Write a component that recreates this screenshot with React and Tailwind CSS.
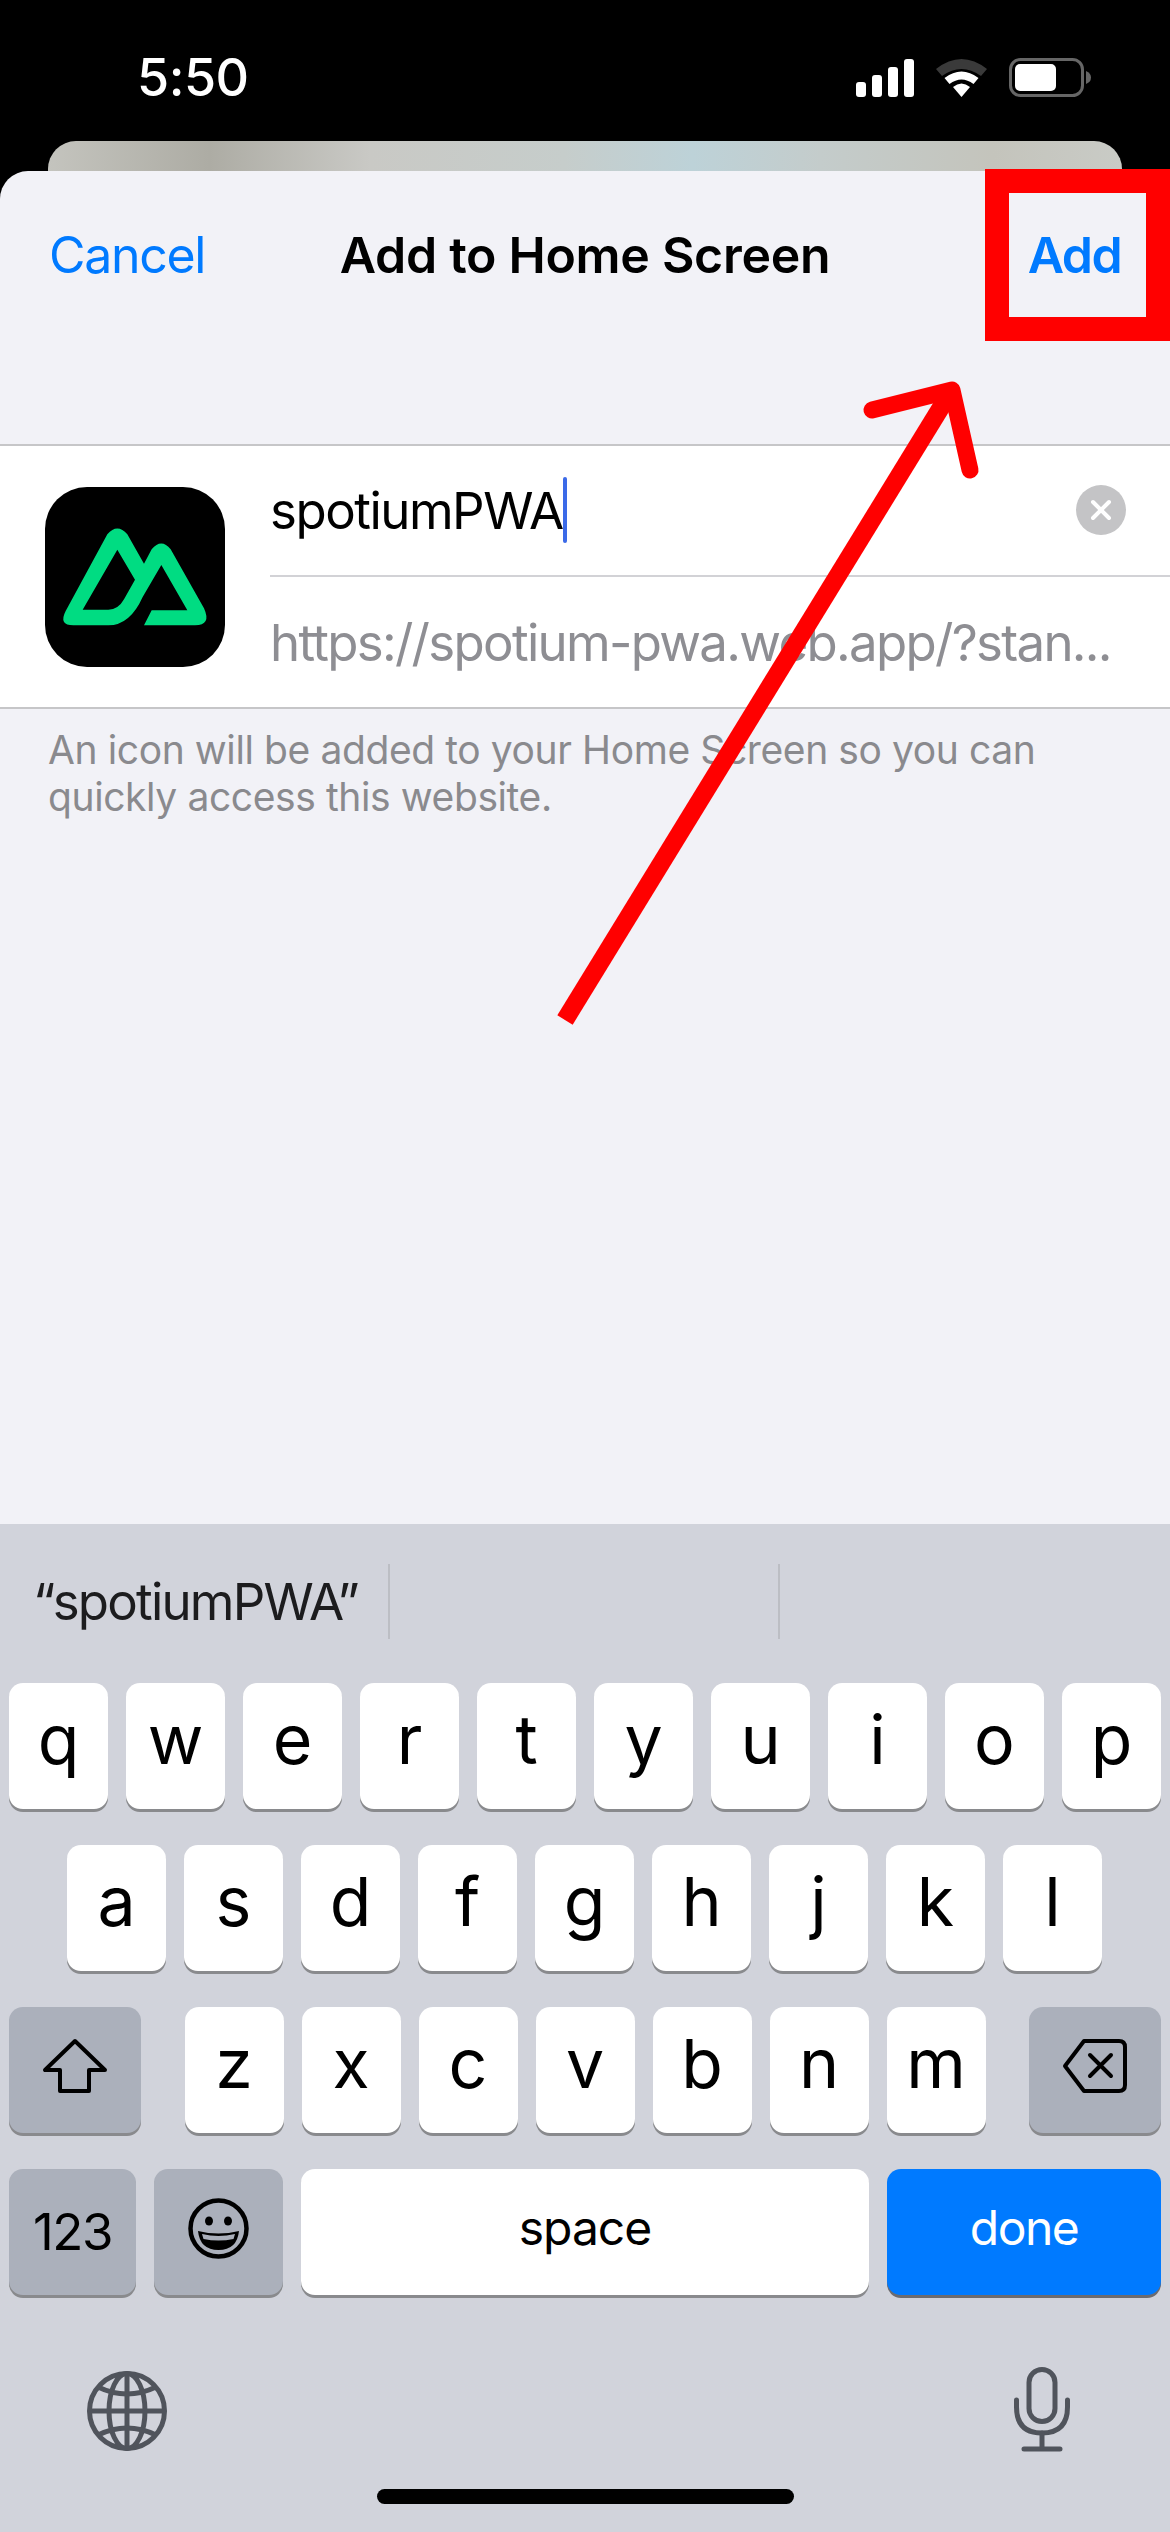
import React from 'react'

const font = { fontFamily: 'Inter, sans-serif' }

const toneClass = {
  light: 'bg-white shadow-[0_3px_0_#898a8d]',
  dark: 'bg-[#abb0bb] shadow-[0_3px_0_#898a8d]',
  blue: 'bg-[#007aff] shadow-[0_3px_0_#6b6b70]',
}

const Key = ({ label, tone = 'light', children, className = 'w-[99px]' }) => (
  <div className={`flex h-[126px] items-center justify-center rounded-[14px] pb-2 text-black ${toneClass[tone]} ${className}`}>
    {label && <span className="mb-[6px] text-[68px] leading-none">{label}</span>}
    {children}
  </div>
)

const Row = ({ keys, className = '' }) => (
  <div className={`flex gap-[18px] ${className}`}>
    {keys.split('').map((k) => <Key key={k} label={k} />)}
  </div>
)

const NuxtLogo = () => (
  <svg width="180" height="180" viewBox="75 48 540 540">
    <path
      fill="#00dc82"
      fillRule="evenodd"
      d="M372 463 L395 418 L502 418 L424 282 L368 378 Q330 463 265 463 L160 463 Q115 463 137 420 L262 190 Q292 155 322 190 L372 278 L395 235 Q424 200 452 235 L552 412 Q575 463 525 463 Z M292 236 L188 416 L265 416 Q295 416 312 385 L345 326 Z"
    />
  </svg>
)

const StatusIcons = () => (
  <div className="flex items-center">
    <svg width="58" height="38" viewBox="0 0 58 38" fill="#fff">
      <rect x="0" y="23" width="10" height="15" rx="3" />
      <rect x="16" y="16" width="10" height="22" rx="3" />
      <rect x="32" y="8" width="10" height="30" rx="3" />
      <rect x="48" y="0" width="10" height="38" rx="3" />
    </svg>
    <svg className="ml-[22px]" width="51" height="38" viewBox="0 0 51 38">
      <path d="M0 10 Q25.5 -10 51 10 L45 17 Q25.5 3 6 17 Z" fill="#3a3a3a" />
      <path d="M8.500 19 Q25.500 6 42.500 19 L37.500 25 Q25.500 16 13.500 25 Z" fill="#fff" />
      <path d="M17 28 Q25.500 21 34 28 L25.500 38 Z" fill="#fff" />
    </svg>
    <svg className="ml-[22px]" width="82" height="39" viewBox="0 0 82 39">
      <rect x="1.500" y="1.500" width="72" height="36" rx="10" fill="none" stroke="#666" strokeWidth="3" />
      <rect x="6" y="6" width="41" height="27" rx="5" fill="#fff" />
      <path d="M77 13 Q82 15 82 19.500 Q82 24 77 26 Z" fill="#666" />
    </svg>
  </div>
)

const ShiftIcon = () => (
  <svg width="66" height="56" viewBox="0 0 66 56" fill="none" stroke="#000" strokeWidth="4" strokeLinejoin="round">
    <path d="M33 3 L3 32 H18 V53 H47 V32 H63 Z" />
  </svg>
)

const DeleteIcon = () => (
  <svg width="66" height="56" viewBox="0 0 66 56" fill="none" stroke="#000" strokeWidth="4" strokeLinejoin="round" strokeLinecap="round">
    <path d="M22 3 H57 Q63 3 63 9 V47 Q63 53 57 53 H22 L3 28 Z" />
    <path d="M28 17 L49 38 M49 17 L28 38" />
  </svg>
)

const EmojiIcon = () => (
  <svg width="61" height="61" viewBox="0 0 61 61">
    <circle cx="30.500" cy="30.500" r="28" fill="none" stroke="#000" strokeWidth="4.500" />
    <ellipse cx="21" cy="23" rx="4" ry="4.500" />
    <ellipse cx="40" cy="23" rx="4" ry="4.500" />
    <path d="M10 33 Q30.500 38 51 33 Q49 52 30.500 52 Q12 52 10 33 Z" />
    <path d="M14 36 Q30.500 40 47 36 L45.500 41 Q30.500 44 15.500 41 Z" fill="#abb0bb" />
  </svg>
)

const GlobeIcon = () => (
  <svg width="80" height="80" viewBox="0 0 80 80" fill="none" stroke="#50545c" strokeWidth="5">
    <circle cx="40" cy="40" r="37.500" />
    <ellipse cx="40" cy="40" rx="18" ry="37.500" />
    <path d="M40 3 V77 M3 40 H77" />
    <path d="M11 16 Q40 30 69 16 M11 64 Q40 50 69 64" />
  </svg>
)

const MicIcon = () => (
  <svg width="56" height="85" viewBox="0 0 56 85" fill="none" stroke="#50545c" strokeWidth="5" strokeLinecap="round">
    <rect x="15" y="2.500" width="26" height="52" rx="13" />
    <path d="M2.500 33 V40 Q2.500 66 28 66 Q53.500 66 53.500 40 V33" />
    <path d="M28 66 V82 M10 82 H46" />
  </svg>
)

export default function App() {
  return (
    <div style={font} className="relative flex h-[2532px] w-[1170px] flex-col overflow-hidden bg-black">
      <div className="flex h-[141px] items-start justify-between pl-[137px] pr-[79px] pt-[58px]">
        <span className="text-[52px] font-medium leading-[40px] tracking-[-0.5px] text-white">5:50</span>
        <StatusIcons />
      </div>

      <div className="mx-[48px] h-[30px] rounded-t-[28px] bg-[linear-gradient(90deg,#c4c4be_0%,#adaca4_15%,#c9c9c5_30%,#c6cdcb_48%,#bdd2d8_60%,#c4cccb_72%,#c4c4bc_88%,#c9cbc6_100%)]" />

      <div className="flex flex-1 flex-col rounded-t-[28px] bg-[#f2f2f7]">
        <div className="grid h-[168px] grid-cols-[1fr_auto_1fr] items-center px-[49px] text-[50px] leading-none">
          <span className="tracking-[-1.3px] text-[#007aff]">Cancel</span>
          <span className="font-semibold tracking-[-0.3px] text-black">Add to Home Screen</span>
          <span className="text-right font-semibold tracking-[-1.6px] text-[#007aff]">Add</span>
        </div>

        <div className="mt-[105px] flex h-[265px] items-center gap-[45px] border-y-2 border-[#c6c6c8] bg-white pl-[45px]">
          <div className="h-[180px] w-[180px] shrink-0 overflow-hidden rounded-[42px] bg-black">
            <NuxtLogo />
          </div>
          <div className="min-w-0 flex-1">
            <div className="flex h-[132px] items-center justify-between border-b-2 border-[#d2d2d6] pr-[44px]">
              <div className="flex items-center text-[51px] leading-none tracking-[-1.5px] text-black">
                spotiumPWA
                <span className="h-[66px] w-[4px] rounded-full bg-[#3b6ae8]" />
              </div>
              <div className="flex h-[50px] w-[50px] items-center justify-center rounded-full bg-[#c4c4c6]">
                <svg width="22" height="22" viewBox="0 0 22 22" stroke="#fff" strokeWidth="4" strokeLinecap="round">
                  <path d="M3 3 L19 19 M19 3 L3 19" />
                </svg>
              </div>
            </div>
            <div className="flex h-[131px] items-center whitespace-nowrap text-[51px] leading-none tracking-[-1.7px] text-[#8e8e93]">
              https://spotium-pwa.web.app/?stan...
            </div>
          </div>
        </div>

        <p className="mt-[17px] px-[48px] text-[39px] leading-[47px] tracking-[-0.4px] text-[#8a8a8e]">
          An icon will be added to your Home Screen so you can
          <br />
          quickly access this website.
        </p>

        <div className="mt-auto h-[1008px] bg-[#d1d3db]">
          <div className="flex h-[159px] items-center pb-[4px]">
            <span className="w-[388px] pl-[33px] text-[51px] leading-none tracking-[-1.8px] text-[#1c1c1e]">“spotiumPWA”</span>
            <span className="h-[75px] w-[2px] bg-[#bcbec4]" />
            <span className="ml-[388px] h-[75px] w-[2px] bg-[#bcbec4]" />
          </div>

          <div className="flex flex-col gap-[36px]">
            <Row keys="qwertyuiop" className="pl-[9px]" />
            <Row keys="asdfghjkl" className="pl-[67px]" />
            <div className="flex justify-between px-[9px]">
              <Key tone="dark" className="w-[132px]">
                <ShiftIcon />
              </Key>
              <Row keys="zxcvbnm" />
              <Key tone="dark" className="w-[132px]">
                <DeleteIcon />
              </Key>
            </div>
            <div className="flex gap-[18px] px-[9px]">
              <Key tone="dark" className="w-[127px]">
                <span className="mt-[6px] text-[51px] leading-none tracking-[-1.5px]">123</span>
              </Key>
              <Key tone="dark" className="w-[129px]">
                <EmojiIcon />
              </Key>
              <Key className="w-[568px]">
                <span className="text-[48px] leading-none tracking-[-1px]">space</span>
              </Key>
              <Key tone="blue" className="w-[274px]">
                <span className="text-[48px] leading-none tracking-[-1.5px] text-white">done</span>
              </Key>
            </div>
          </div>

          <div className="flex items-start justify-between pl-[87px] pr-[100px] pt-[69px]">
            <div className="pt-[7px]">
              <GlobeIcon />
            </div>
            <div className="pt-[3px]">
              <MicIcon />
            </div>
          </div>
          <div className="mx-auto mt-[37px] h-[15px] w-[417px] rounded-full bg-black" />
        </div>
      </div>

      {/* red annotation drawn on top of the screenshot */}
      <div className="absolute left-[985px] top-[169px] h-[172px] w-[185px] border-[24px] border-[#ff0000]" />
      <svg className="absolute left-0 top-0" width="1170" height="1100" viewBox="0 0 1170 1100" fill="none" stroke="#ff0000" strokeWidth="17">
        <path d="M565 1020 L948 396" strokeWidth="18" />
        <path d="M872 410 L952 390 L970 470" strokeLinecap="round" strokeLinejoin="round" />
      </svg>
    </div>
  )
}
